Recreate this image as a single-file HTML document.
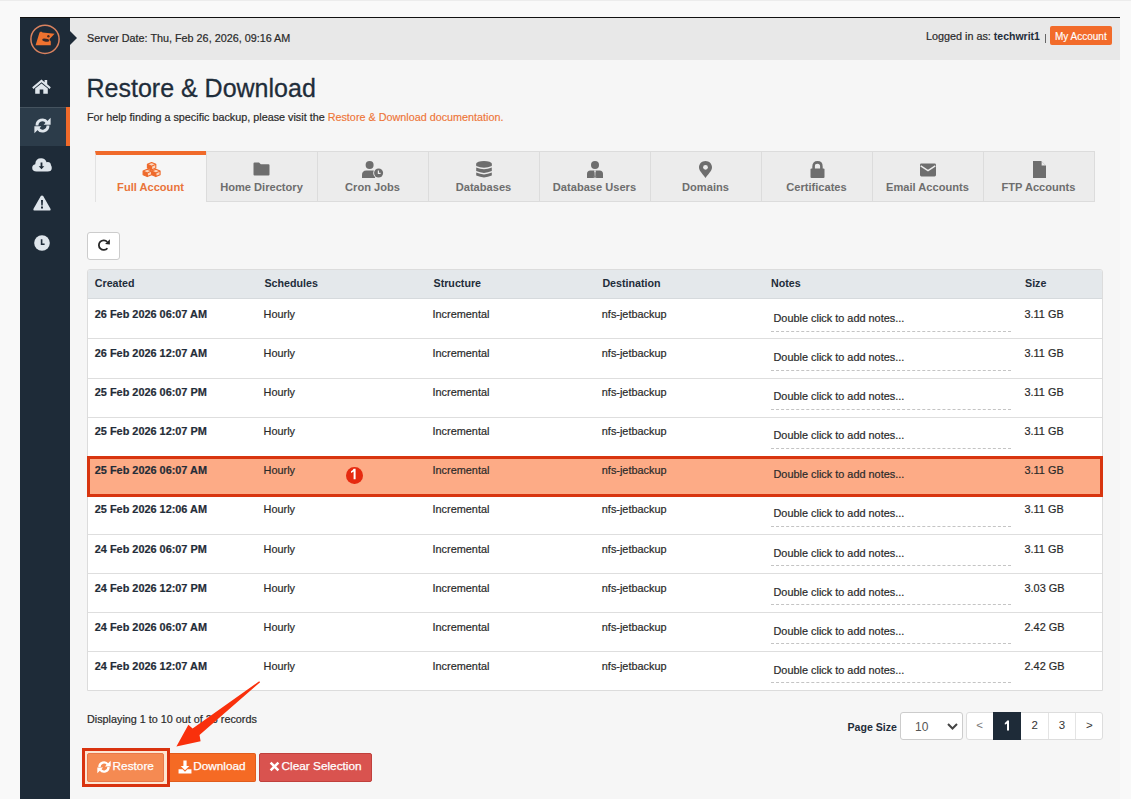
<!DOCTYPE html>
<html><head><meta charset="utf-8">
<style>
*{box-sizing:border-box;margin:0;padding:0}
html,body{width:1131px;height:799px;overflow:hidden;background:#f9f9f9;font-family:"Liberation Sans",sans-serif;color:#333}
.abs{position:absolute}
#frame{position:absolute;left:20px;top:17px;width:1100px;height:782px;background:#f6f6f6;border-top:1px solid #111}
#side{position:absolute;left:20px;top:17px;width:50px;height:782px;background:#1e2b38;border-top:1px solid #111}
#sact{position:absolute;left:20px;top:107px;width:50px;height:39px;background:#2c3c4a;border-right:4px solid #f06a2a;box-shadow:inset 0 1px #45535f}
#hdr{position:absolute;left:70px;top:18px;width:1050px;height:42px;background:#e8e8e8}
#tri{position:absolute;left:70px;top:30.5px;width:0;height:0;border-top:7px solid transparent;border-bottom:7px solid transparent;border-left:7px solid #1e2b38}
.t{position:absolute;white-space:nowrap;line-height:1}
.tab{position:absolute;top:151px;width:111px;height:51px;background:#ececec;border:1px solid #dcdcdc;border-right:none}
.tab.last{width:112px;border-right:1px solid #dcdcdc}
.tab.act{background:#f6f6f6;border:none;border-left:1px solid #e2e2e2;border-top:4px solid #f06a2a}
.ticon{position:absolute;top:161px;width:111px;height:17px;display:flex;justify-content:center;align-items:flex-end}
.tlab{position:absolute;top:181px;width:111px;text-align:center;font-size:11.1px;font-weight:bold;color:#6e6e6e;line-height:12px;white-space:nowrap}
.tlab.on{color:#e9743a}
#refresh{position:absolute;left:87px;top:232px;width:33px;height:28px;background:#fff;border:1px solid #ccc;border-radius:3px}
#table{position:absolute;left:87px;top:269px;width:1016px;height:422px;background:#fff;border:1px solid #dcdcdc;border-radius:3px 3px 0 0}
#thead{position:absolute;left:88px;top:270px;width:1014px;height:29px;background:#e4e8eb;border-bottom:1px solid #d6dadd;border-radius:2px 2px 0 0}
.th{position:absolute;top:276.6px;font-size:10.7px;font-weight:bold;color:#1f2d3a;line-height:12px;white-space:nowrap}
.tr{position:absolute;left:0;width:1131px;height:12px;font-size:10.9px;line-height:12px;color:#2a2a2a;-webkit-text-stroke:0.2px #2a2a2a}
.tr span{position:absolute;top:0;white-space:nowrap}
.tr .c1{left:94.8px;font-weight:bold;color:#1f2d3a}
.tr .c2{left:263.6px}
.tr .c3{left:432.5px}
.tr .c4{left:601.8px}
.tr .c6{left:1024.5px}
.tn{position:absolute;left:773.5px;font-size:10.9px;line-height:12px;color:#2a2a2a;-webkit-text-stroke:0.2px #2a2a2a;white-space:nowrap}
.dash{position:absolute;left:770.5px;width:240px;height:0;border-top:1px dashed #c4c4c4}
.btn{position:absolute;top:753px;height:29px;border-radius:2px}
</style></head><body>
<div class="abs" style="left:0;top:0;width:1131px;height:1px;background:#ececec"></div>
<div id="frame"></div>
<div id="hdr"></div>
<div id="side"></div>
<div id="sact"></div>
<div id="tri"></div>
<svg class="abs" style="left:29px;top:23px" width="32" height="32" viewBox="0 0 32 32"><circle cx="16" cy="16.3" r="14.1" fill="none" stroke="#d9825f" stroke-width="1.5"/><path fill="#f0722f" d="M10.5 9.4 L12 8.6 L13.6 9.6 L25.6 10.8 L20.4 16.2 L21.8 18.6 V22.3 H6.6Z"/><ellipse cx="16.8" cy="17.2" rx="3.6" ry="1.5" transform="rotate(10 16.8 17.2)" fill="#3a2a2a"/><circle cx="19.4" cy="13.2" r="1.2" fill="#4a2c22"/></svg>

<svg class="abs" style="left:32px;top:79px" width="19" height="15" viewBox="0 0 19 15"><g fill="#dfe6ec"><path d="M9.5 0.4 L0.2 8.2 L1.4 9.9 L9.5 3.3 L17.6 9.9 L18.8 8.2 L15.2 5.2 V1.0 H12.6 V3.2Z"/><path d="M3.2 9.6 L9.5 4.5 L15.8 9.6 V14.8 H11.3 V10.6 H7.7 V14.8 H3.2Z"/></g></svg>
<svg class="abs" style="left:33.5px;top:117px;color:#dfe6ec" width="17" height="17" viewBox="0 0 17 17"><g fill="#dfe6ec"><path d="M3.0 8.5 A5.5 5.5 0 0 1 13.0 5.3" stroke="currentColor" stroke-width="2.9" fill="none"/><path d="M16.6 0.8 V7.8 H9.6Z"/><path d="M14.0 8.5 A5.5 5.5 0 0 1 4.0 11.7" stroke="currentColor" stroke-width="2.9" fill="none"/><path d="M0.4 16.2 V9.2 H7.4Z"/></g></svg>
<svg class="abs" style="left:32px;top:157.5px" width="20" height="14" viewBox="0 0 20 14"><path fill="#dfe6ec" d="M4.6 13.6 Q0.2 13.6 0.2 9.8 Q0.2 6.8 3.2 6.2 Q3.6 0.3 9.2 0.3 Q13.2 0.3 14.6 4.2 Q15.2 4.0 15.8 4.0 Q18.6 4.0 19 7.2 Q19.8 8.2 19.8 10 Q19.8 13.6 15.6 13.6Z"/><path fill="#1e2b38" d="M8.6 4.4 H10.4 V8.2 H12.3 L9.5 11.3 L6.7 8.2 H8.6Z"/></svg>
<svg class="abs" style="left:33px;top:195px" width="18" height="16" viewBox="0 0 18 16"><path fill="#dfe6ec" d="M9 0.4 Q9.8 0.4 10.2 1.1 L17.6 14 Q18 15.6 16.6 15.6 H1.4 Q0 15.6 0.4 14 L7.8 1.1 Q8.2 0.4 9 0.4Z"/><path fill="#1e2b38" d="M8 5 H10 L9.7 10.4 H8.3Z M8 11.6 H10 V13.6 H8Z"/></svg>
<svg class="abs" style="left:34px;top:235px" width="16" height="16" viewBox="0 0 16 16"><circle cx="8" cy="8" r="7.8" fill="#dfe6ec"/><path d="M7.6 4.2 V9.2 H10.6" stroke="#1e2b38" stroke-width="1.6" fill="none"/></svg>

<div class="t" style="left:87px;top:33px;font-size:10.8px;color:#2a2a2a;-webkit-text-stroke:0.2px #2a2a2a">Server Date: Thu, Feb 26, 2026, 09:16 AM</div>
<div class="t" style="left:926px;top:31px;font-size:10.8px;color:#2a2a2a;-webkit-text-stroke:0.2px #2a2a2a">Logged in as: <b style="color:#1f2d3a;font-size:10.5px;-webkit-text-stroke:0">techwrit1</b></div>
<div class="abs" style="left:1045px;top:33.5px;width:1px;height:9px;background:#666"></div>
<div class="abs" style="left:1050px;top:26px;width:62px;height:19px;background:#f26b2a;border-radius:2px"></div>
<div class="t" style="left:1055px;top:32px;font-size:10px;color:#fff;-webkit-text-stroke:0.15px #fff">My Account</div>

<div class="t" style="left:86.5px;top:75.8px;font-size:25px;color:#1f2d3a;-webkit-text-stroke:0.3px #1f2d3a">Restore &amp; Download</div>
<div class="t" style="left:87px;top:112px;font-size:10.8px;color:#2a2a2a;-webkit-text-stroke:0.2px #2a2a2a">For help finding a specific backup, please visit the <span style="color:#ee7538;-webkit-text-stroke:0.15px #ee7538">Restore &amp; Download documentation.</span></div>

<div class="tab act" style="left:95px"></div>
<div class="ticon" style="left:95px"><svg width="19" height="16" viewBox="0 0 19 16" style="margin-left:2px"><path fill="#fcd7bf" d="M9.60 0.50 L13.80 2.35 L13.80 6.05 L9.60 7.90 L5.40 6.05 L5.40 2.35Z"/><path fill="#ee6a2c" d="M5.40 2.35 L9.60 4.20 L9.60 7.90 L5.40 6.05Z"/><path fill="none" stroke="#ee6a2c" stroke-width="1.1" stroke-linejoin="round" d="M9.60 0.50 L13.80 2.35 L13.80 6.05 L9.60 7.90 L5.40 6.05 L5.40 2.35Z M5.40 2.35 L9.60 4.20 L13.80 2.35 M9.60 4.20 L9.60 7.90"/><path fill="#fcd7bf" d="M5.30 7.20 L9.50 9.05 L9.50 12.75 L5.30 14.60 L1.10 12.75 L1.10 9.05Z"/><path fill="#ee6a2c" d="M1.10 9.05 L5.30 10.90 L5.30 14.60 L1.10 12.75Z"/><path fill="none" stroke="#ee6a2c" stroke-width="1.1" stroke-linejoin="round" d="M5.30 7.20 L9.50 9.05 L9.50 12.75 L5.30 14.60 L1.10 12.75 L1.10 9.05Z M1.10 9.05 L5.30 10.90 L9.50 9.05 M5.30 10.90 L5.30 14.60"/><path fill="#fcd7bf" d="M13.90 7.20 L18.10 9.05 L18.10 12.75 L13.90 14.60 L9.70 12.75 L9.70 9.05Z"/><path fill="#ee6a2c" d="M9.70 9.05 L13.90 10.90 L13.90 14.60 L9.70 12.75Z"/><path fill="none" stroke="#ee6a2c" stroke-width="1.1" stroke-linejoin="round" d="M13.90 7.20 L18.10 9.05 L18.10 12.75 L13.90 14.60 L9.70 12.75 L9.70 9.05Z M9.70 9.05 L13.90 10.90 L18.10 9.05 M13.90 10.90 L13.90 14.60"/></svg></div>
<div class="tlab on" style="left:95px">Full Account</div>
<div class="tab" style="left:206px"></div>
<div class="ticon" style="left:206px"><svg width="17" height="14" viewBox="0 0 17 14" style="margin-bottom:1.6px"><path fill="#6e6e6e" d="M1.5 0.5 H6 L7.8 2.3 H15.5 Q16.5 2.3 16.5 3.3 V12.5 Q16.5 13.5 15.5 13.5 H1.5 Q0.5 13.5 0.5 12.5 V1.5 Q0.5 0.5 1.5 0.5Z"/></svg></div>
<div class="tlab" style="left:206px">Home Directory</div>
<div class="tab" style="left:317px"></div>
<div class="ticon" style="left:317px"><svg width="22" height="17" viewBox="0 0 22 17"><g fill="#6e6e6e"><circle cx="7.6" cy="4" r="4"/><path d="M0 17 V14 Q0 9.4 4.4 9.4 H11 Q12.6 9.4 13.6 10 L13 17Z"/></g><circle cx="16.6" cy="12" r="5.4" fill="#ececec"/><circle cx="16.6" cy="12" r="4.5" fill="#6e6e6e"/><path d="M16.4 9.4 V12.4 H18.6" stroke="#ececec" stroke-width="1.2" fill="none"/></svg></div>
<div class="tlab" style="left:317px">Cron Jobs</div>
<div class="tab" style="left:428px"></div>
<div class="ticon" style="left:428px"><svg width="16" height="17" viewBox="0 0 16 17"><g fill="#6e6e6e"><ellipse cx="8" cy="2.8" rx="7.8" ry="2.8"/><path d="M0.2 2.8 V5.0 Q8 8.6 15.8 5.0 V2.8Z"/><path d="M0.2 6.5 Q8 10.1 15.8 6.5 V10.1 Q8 13.7 0.2 10.1Z"/><path d="M0.2 11.6 Q8 15.2 15.8 11.6 V14.6 Q8 18.2 0.2 14.6Z"/></g></svg></div>
<div class="tlab" style="left:428px">Databases</div>
<div class="tab" style="left:539px"></div>
<div class="ticon" style="left:539px"><svg width="16" height="17" viewBox="0 0 16 17"><g fill="#6e6e6e"><circle cx="8" cy="4" r="4"/><path d="M0 17 V13 Q0 9.4 3.4 9.4 H12.6 Q16 9.4 16 13 V17Z"/></g><path d="M7 9.6 H9 L8.6 11 L9.2 16.5 H6.8 L7.4 11Z" fill="#ececec"/><path d="M7.6 11.2 H8.4 L8.8 15.6 L8 16.4 L7.2 15.6Z" fill="#6e6e6e"/></svg></div>
<div class="tlab" style="left:539px">Database Users</div>
<div class="tab" style="left:650px"></div>
<div class="ticon" style="left:650px"><svg width="13" height="17" viewBox="0 0 13 17"><path fill="#6e6e6e" d="M6.5 0 C10.2 0 13 2.8 13 6.4 C13 10 8.5 13.5 6.5 17 C4.5 13.5 0 10 0 6.4 C0 2.8 2.8 0 6.5 0Z"/><circle cx="6.5" cy="6.3" r="2.4" fill="#ececec"/></svg></div>
<div class="tlab" style="left:650px">Domains</div>
<div class="tab" style="left:761px"></div>
<div class="ticon" style="left:761px"><svg width="15" height="17" viewBox="0 0 15 17" style="margin-left:2px"><path d="M3.6 8 V5.4 Q3.6 1.4 7.5 1.4 Q11.4 1.4 11.4 5.4 V8" stroke="#6e6e6e" stroke-width="2.6" fill="none"/><rect x="0.5" y="7.6" width="14" height="9.4" rx="1" fill="#6e6e6e"/></svg></div>
<div class="tlab" style="left:761px">Certificates</div>
<div class="tab" style="left:872px"></div>
<div class="ticon" style="left:872px"><svg width="18" height="14" viewBox="0 0 17 14" style="margin-bottom:1.4px;margin-left:1px"><rect x="0.5" y="0.5" width="16" height="13" rx="1.4" fill="#6e6e6e"/><path d="M1.2 2.8 L8.5 7.6 L15.8 2.8" stroke="#ececec" stroke-width="1.4" fill="none"/></svg></div>
<div class="tlab" style="left:872px">Email Accounts</div>
<div class="tab last" style="left:983px"></div>
<div class="ticon" style="left:983px"><svg width="13" height="17" viewBox="0 0 13 17" style="margin-left:2px"><path fill="#6e6e6e" d="M0 0 H8.2 L13 4.8 V17 H0Z"/><path fill="#ececec" d="M8.6 0.2 V4.4 H12.8Z"/></svg></div>
<div class="tlab" style="left:983px">FTP Accounts</div>

<div id="refresh"></div>
<svg class="abs" style="left:92px;top:234px" width="24" height="24" viewBox="0 0 24 24"><path d="M15.4 14.2 A4.8 4.8 0 1 1 15.3 8.0" stroke="#262626" stroke-width="1.8" fill="none"/><path d="M13.1 10.1 L17.9 5.3 V10.5Z" fill="#262626"/></svg>

<div id="table"></div>
<div id="thead"></div>
<div class="th" style="left:94.8px">Created</div>
<div class="th" style="left:264.4px">Schedules</div>
<div class="th" style="left:433.5px">Structure</div>
<div class="th" style="left:602.4px">Destination</div>
<div class="th" style="left:771px">Notes</div>
<div class="th" style="left:1025px">Size</div>
<div class="abs" style="left:88px;top:338px;width:1014px;height:1px;background:#dedede"></div>
<div class="abs" style="left:88px;top:378px;width:1014px;height:1px;background:#dedede"></div>
<div class="abs" style="left:88px;top:417px;width:1014px;height:1px;background:#dedede"></div>
<div class="abs" style="left:88px;top:456px;width:1014px;height:1px;background:#dedede"></div>
<div class="abs" style="left:88px;top:495px;width:1014px;height:1px;background:#dedede"></div>
<div class="abs" style="left:88px;top:534px;width:1014px;height:1px;background:#dedede"></div>
<div class="abs" style="left:88px;top:573px;width:1014px;height:1px;background:#dedede"></div>
<div class="abs" style="left:88px;top:612px;width:1014px;height:1px;background:#dedede"></div>
<div class="abs" style="left:88px;top:651px;width:1014px;height:1px;background:#dedede"></div>
<div class="tr" style="top:308.0px"><span class="c1">26 Feb 2026 06:07 AM</span><span class="c2">Hourly</span><span class="c3">Incremental</span><span class="c4">nfs-jetbackup</span><span class="c6">3.11 GB</span></div>
<div class="tn" style="top:311.7px">Double click to add notes...</div>
<div class="dash" style="top:331px"></div>
<div class="tr" style="top:347.0px"><span class="c1">26 Feb 2026 12:07 AM</span><span class="c2">Hourly</span><span class="c3">Incremental</span><span class="c4">nfs-jetbackup</span><span class="c6">3.11 GB</span></div>
<div class="tn" style="top:350.7px">Double click to add notes...</div>
<div class="dash" style="top:370px"></div>
<div class="tr" style="top:386.0px"><span class="c1">25 Feb 2026 06:07 PM</span><span class="c2">Hourly</span><span class="c3">Incremental</span><span class="c4">nfs-jetbackup</span><span class="c6">3.11 GB</span></div>
<div class="tn" style="top:389.7px">Double click to add notes...</div>
<div class="dash" style="top:409px"></div>
<div class="tr" style="top:425.0px"><span class="c1">25 Feb 2026 12:07 PM</span><span class="c2">Hourly</span><span class="c3">Incremental</span><span class="c4">nfs-jetbackup</span><span class="c6">3.11 GB</span></div>
<div class="tn" style="top:428.7px">Double click to add notes...</div>
<div class="dash" style="top:448px"></div>
<div class="tr" style="top:464.0px"><span class="c1">25 Feb 2026 06:07 AM</span><span class="c2">Hourly</span><span class="c3">Incremental</span><span class="c4">nfs-jetbackup</span><span class="c6">3.11 GB</span></div>
<div class="tn" style="top:467.7px">Double click to add notes...</div>
<div class="dash" style="top:487px"></div>
<div class="tr" style="top:503.0px"><span class="c1">25 Feb 2026 12:06 AM</span><span class="c2">Hourly</span><span class="c3">Incremental</span><span class="c4">nfs-jetbackup</span><span class="c6">3.11 GB</span></div>
<div class="tn" style="top:506.7px">Double click to add notes...</div>
<div class="dash" style="top:526px"></div>
<div class="tr" style="top:543.0px"><span class="c1">24 Feb 2026 06:07 PM</span><span class="c2">Hourly</span><span class="c3">Incremental</span><span class="c4">nfs-jetbackup</span><span class="c6">3.11 GB</span></div>
<div class="tn" style="top:546.7px">Double click to add notes...</div>
<div class="dash" style="top:565px"></div>
<div class="tr" style="top:582.0px"><span class="c1">24 Feb 2026 12:07 PM</span><span class="c2">Hourly</span><span class="c3">Incremental</span><span class="c4">nfs-jetbackup</span><span class="c6">3.03 GB</span></div>
<div class="tn" style="top:585.7px">Double click to add notes...</div>
<div class="dash" style="top:604px"></div>
<div class="tr" style="top:621.0px"><span class="c1">24 Feb 2026 06:07 AM</span><span class="c2">Hourly</span><span class="c3">Incremental</span><span class="c4">nfs-jetbackup</span><span class="c6">2.42 GB</span></div>
<div class="tn" style="top:624.7px">Double click to add notes...</div>
<div class="dash" style="top:643px"></div>
<div class="tr" style="top:660.0px"><span class="c1">24 Feb 2026 12:07 AM</span><span class="c2">Hourly</span><span class="c3">Incremental</span><span class="c4">nfs-jetbackup</span><span class="c6">2.42 GB</span></div>
<div class="tn" style="top:663.7px">Double click to add notes...</div>
<div class="dash" style="top:682px"></div>

<div class="abs" style="left:87px;top:456px;width:1016px;height:40.5px;background:#fdab86;border:3px solid #d8350f"></div>
<div class="tr" style="top:464px"><span class="c1">25 Feb 2026 06:07 AM</span><span class="c2">Hourly</span><span class="c3">Incremental</span><span class="c4">nfs-jetbackup</span><span class="c6">3.11 GB</span></div>
<div class="tn" style="top:467.7px">Double click to add notes...</div>
<div class="abs" style="left:345.8px;top:466.5px;width:17px;height:17.4px;border-radius:50%;background:#e62a10"></div>
<svg class="abs" style="left:345px;top:466px" width="18" height="18" viewBox="0 0 18 18"><path fill="#fff" d="M8.6 2.8 H10.6 V13.2 H8.6 V5.6 Q7.6 6.6 6 7 V5.2 Q7.8 4.4 8.6 2.8Z"/></svg>

<div class="t" style="left:87px;top:714px;font-size:10.8px;color:#2a2a2a;-webkit-text-stroke:0.2px #2a2a2a">Displaying 1 to 10 out of 26 records</div>

<div class="t" style="left:847.5px;top:722.3px;font-size:10.6px;font-weight:bold;color:#1f2d3a">Page Size</div>
<div class="abs" style="left:900px;top:712px;width:63px;height:28px;border:1px solid #ccc;border-radius:3px;background:#fff"></div>
<div class="t" style="left:915px;top:720.7px;font-size:12px;color:#555">10</div>
<svg class="abs" style="left:947px;top:723px" width="11" height="7" viewBox="0 0 11 7"><path d="M1 1 L5.5 5.5 L10 1" stroke="#444" stroke-width="2" fill="none"/></svg>
<div class="abs" style="left:966px;top:712px;width:137px;height:28px;border:1px solid #ddd;border-radius:3px;background:#fff"></div>
<div class="t" style="left:966px;top:720px;width:27.3px;text-align:center;font-size:11.5px;color:#777">&lt;</div>
<div class="abs" style="left:993px;top:712px;width:28px;height:28px;background:#1e2b38"></div>
<svg class="abs" style="left:993px;top:712px" width="28" height="28" viewBox="0 0 28 28"><path fill="#fff" d="M14.2 8.6 H16 V18.4 H14 V11.4 Q13.2 12.2 11.8 12.6 V10.9 Q13.5 10.1 14.2 8.6Z"/></svg>
<div class="abs" style="left:1048px;top:713px;width:1px;height:26px;background:#e4e4e4"></div>
<div class="abs" style="left:1075px;top:713px;width:1px;height:26px;background:#e4e4e4"></div>
<div class="t" style="left:1021px;top:720px;width:27.3px;text-align:center;font-size:11.5px;color:#333">2</div>
<div class="t" style="left:1048.4px;top:720px;width:27.3px;text-align:center;font-size:11.5px;color:#333">3</div>
<div class="t" style="left:1075.6px;top:720px;width:27.3px;text-align:center;font-size:11.5px;color:#333">&gt;</div>

<div class="abs" style="left:82px;top:748px;width:88px;height:38.5px;border:3px solid #d9330f;background:#fde6d2"></div>
<div class="btn" style="left:87px;width:77px;background:#f58a52;border:1px solid #e8784a"></div>
<div class="btn" style="left:170px;width:86px;background:#f56a24;border:1px solid #e05c1c;border-left:none;border-radius:0 2px 2px 0"></div>
<div class="btn" style="left:259px;width:113px;background:#d9534f;border:1px solid #c0403c"></div>
<div class="t" style="left:112.6px;top:760.6px;font-size:11.8px;color:#fff;-webkit-text-stroke:0.25px #fff">Restore</div>
<div class="t" style="left:193.2px;top:760.6px;font-size:11.8px;color:#fff;-webkit-text-stroke:0.25px #fff">Download</div>
<div class="t" style="left:281.6px;top:760.6px;font-size:11.8px;color:#fff;-webkit-text-stroke:0.25px #fff">Clear Selection</div>
<svg class="abs" style="left:96.5px;top:759.5px;color:#fff" width="14" height="14" viewBox="0 0 17 17"><g fill="#fff"><path d="M3.0 8.5 A5.5 5.5 0 0 1 13.0 5.3" stroke="currentColor" stroke-width="2.9" fill="none"/><path d="M16.6 0.8 V7.8 H9.6Z"/><path d="M14.0 8.5 A5.5 5.5 0 0 1 4.0 11.7" stroke="currentColor" stroke-width="2.9" fill="none"/><path d="M0.4 16.2 V9.2 H7.4Z"/></g></svg>
<svg class="abs" style="left:177.5px;top:759.5px" width="14" height="14" viewBox="0 0 13 13"><g fill="#fff"><path d="M5 0.5 H8 V5.5 H10.5 L6.5 9.5 L2.5 5.5 H5Z"/><path d="M0.5 8.5 H4.2 L6.5 10.8 L8.8 8.5 H12.5 V12.5 H0.5Z"/></g></svg>
<svg class="abs" style="left:269px;top:761px" width="11" height="11" viewBox="0 0 11 11"><path d="M1.6 1.6 L9.4 9.4 M9.4 1.6 L1.6 9.4" stroke="#fff" stroke-width="2.5"/></svg>

<svg class="abs" style="left:0;top:0" width="1131" height="799"><path fill="#f9300c" d="M259.2 681.3 L192.6 728.6 L188.4 724.8 L176.4 746.4 L200.6 741.2 L199.5 735 L260.1 682.3Z"/></svg>
</body></html>
